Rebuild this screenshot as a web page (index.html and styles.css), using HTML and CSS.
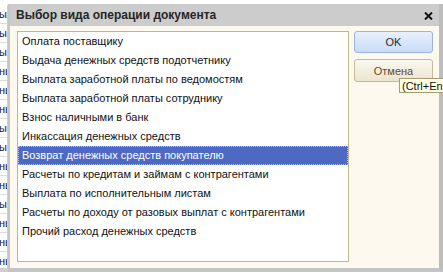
FILE: index.html
```html
<!doctype html>
<html>
<head>
	<meta charset="utf-8" />
	<title>Выбор вида операции документа</title>
	<link rel="stylesheet" href="styles.css">
</head>
<body>
<div class="desk">
	<div class="grid">
		<div class="row"><span class="c0">ыш</span><span class="c1"></span><span class="c2"></span><span class="c3"></span><span class="c4"></span></div>
		<div class="row"><span class="c0">ым</span><span class="c1"></span><span class="c2"></span><span class="c3"></span><span class="c4"></span></div>
		<div class="row"><span class="c0">ыш</span><span class="c1"></span><span class="c2"></span><span class="c3"></span><span class="c4"></span></div>
		<div class="row"><span class="c0">нь</span><span class="c1"></span><span class="c2"></span><span class="c3"></span><span class="c4"></span></div>
		<div class="row"><span class="c0">нь</span><span class="c1"></span><span class="c2"></span><span class="c3"></span><span class="c4"></span></div>
		<div class="row"><span class="c0">нь</span><span class="c1"></span><span class="c2"></span><span class="c3"></span><span class="c4"></span></div>
		<div class="row"><span class="c0">ым</span><span class="c1"></span><span class="c2"></span><span class="c3"></span><span class="c4"></span></div>
		<div class="row"><span class="c0">ыш</span><span class="c1"></span><span class="c2"></span><span class="c3"></span><span class="c4"></span></div>
		<div class="row"><span class="c0">нь</span><span class="c1"></span><span class="c2"></span><span class="c3"></span><span class="c4"></span></div>
		<div class="row"><span class="c0">нь</span><span class="c1"></span><span class="c2"></span><span class="c3"></span><span class="c4"></span></div>
		<div class="row"><span class="c0">ым</span><span class="c1"></span><span class="c2"></span><span class="c3"></span><span class="c4"></span></div>
		<div class="row"><span class="c0">нь</span><span class="c1"></span><span class="c2"></span><span class="c3"></span><span class="c4"></span></div>
		<div class="row"><span class="c0">нь</span><span class="c1"></span><span class="c2"></span><span class="c3"></span><span class="c4"></span></div>
		<div class="row"><span class="c0">нь</span><span class="c1"></span><span class="c2"></span><span class="c3"></span><span class="c4"></span></div>
	</div>
	<div class="foot"></div>

	<div class="dialog">
		<div class="title">
			<span>Выбор вида операции документа</span>
			<svg class="close" width="9" height="8" viewBox="0 0 9 8"><path d="M1 0.5 L8 7.5 M8 0.5 L1 7.5" stroke="#111" stroke-width="2"/></svg>
		</div>
		<div class="body">
			<ul class="list">
				<li>Оплата поставщику</li>
				<li>Выдача денежных средств подотчетнику</li>
				<li>Выплата заработной платы по ведомостям</li>
				<li>Выплата заработной платы сотруднику</li>
				<li>Взнос наличными в банк</li>
				<li>Инкассация денежных средств</li>
				<li class="sel">Возврат денежных средств покупателю</li>
				<li>Расчеты по кредитам и займам с контрагентами</li>
				<li>Выплата по исполнительным листам</li>
				<li>Расчеты по доходу от разовых выплат с контрагентами</li>
				<li>Прочий расход денежных средств</li>
			</ul>
			<div class="buttons">
				<button class="btn ok">OK</button>
				<button class="btn cancel">Отмена</button>
			</div>
		</div>
	</div>
	<div class="tip">(Ctrl+Enter)</div>
</div>
</body>
</html>
```

FILE: styles.css
```css
body,ul,li{margin:0;padding:0;list-style:none;}
body{font-family:"Liberation Sans",Arial,sans-serif;font-size:11px;color:#111;background:#fff;overflow:hidden;}
.desk{width:443px;height:272px;position:relative;overflow:hidden;}

/* таблица за окном */
.grid{height:268px;padding-top:5px;box-sizing:border-box;overflow:hidden;}
.row{display:flex;height:19px;border-bottom:1px solid #dcdcdc;box-sizing:border-box;}
.row span{border-right:1px solid #cfcfcf;box-sizing:border-box;height:19px;}
.c0{width:8px;overflow:hidden;white-space:nowrap;line-height:18px;color:#1c1c2c;text-indent:-1px;}
.c1{width:67px;}
.c2{width:80px;}
.c3{width:60px;}
.c4{width:153px;}
.foot{height:4px;background:#cfcfcf;}

/* окно */
.dialog{position:absolute;left:8px;top:4px;width:435px;height:268px;box-sizing:border-box;
	border-left:2px solid #c6c6c6;border-right:4px solid #bdbdbd;border-bottom:4px solid #c4c4c4;
	background:#fdf9ee;display:flex;flex-direction:column;}
.title{height:22px;background:#cccccc;display:flex;align-items:center;justify-content:space-between;
	padding:0 6px 0 6px;font-weight:bold;font-size:12px;color:#262626;}
.close{margin-top:1px;}
.body{display:flex;gap:5px;padding:5px 0 0 7px;}
.list{width:332px;height:231px;box-sizing:border-box;border:1px solid #c4b58e;background:#fff;}
.list li{height:19px;line-height:19px;padding-left:4px;white-space:nowrap;color:#111;}
.list li.sel{background:#4e69c4;color:#fff;outline:1px dotted #b4c0ea;outline-offset:-1px;}

.buttons{display:flex;flex-direction:column;gap:6px;width:79px;}
.btn{font-family:"Liberation Sans",Arial,sans-serif;font-size:11px;border-radius:3px;padding:0;}
.ok{height:22px;border:1px solid #9ab5e2;background:linear-gradient(#e8f0fd,#c9dcf7);color:#2a2a2a;}
.cancel{height:23px;border:1px solid #c6bb98;background:linear-gradient(#fbf8ef,#ebe5d0);color:#6a4a22;}

.tip{position:absolute;left:399px;top:78px;height:15px;line-height:14px;padding:0 3px 0 2px;box-sizing:border-box;
	border:1px solid #a69a78;background:#ffffe1;color:#111;white-space:nowrap;}
```
